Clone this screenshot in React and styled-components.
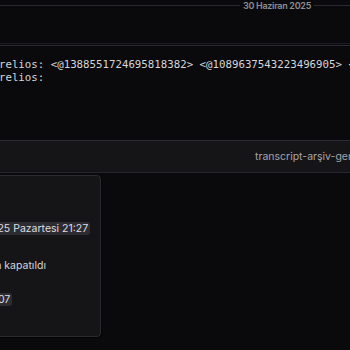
import React from 'react';
import styled, { createGlobalStyle } from 'styled-components';

const GlobalStyle = createGlobalStyle`
  html, body { margin: 0; padding: 0; background: #0a0a0c; }
  body { width: 350px; height: 350px; overflow: hidden; font-family: Inter, "Noto Sans", sans-serif; }
`;

const Page = styled.div` width: 350px; height: 350px; overflow: hidden; background: #0a0a0c; `;

const DateDivider = styled.div` display: flex; align-items: center; gap: 3px; height: 11px; `;
const DividerLine = styled.div` flex: ${p => (p.$short ? '0 0 36px' : '1')}; height: 1px; background: #2a2a2f; `;
const DividerText = styled.span` font-size: 9px; letter-spacing: -0.3px; font-weight: 600; color: #8e8e93; line-height: 11px; white-space: nowrap; `;

const Column = styled.div` margin-left: -60px; width: 600px; `;

const Separator = styled.div` margin-top: 32px; height: 1px; background: #1d1d21; `;

const CodeBlock = styled.pre`
  margin: 1px 0 0;
  border-top: 1px solid #2a2a2f;
  padding: 12px 0 0 46px;
  height: 82px;
  font-family: "DejaVu Sans Mono", "Liberation Mono", monospace;
  font-size: 10.75px;
  line-height: 13px;
  color: #d6d6d9;
  white-space: pre;
`;

const AttachmentBar = styled.div`
  display: flex;
  align-items: center;
  height: 31px;
  padding-left: 315px;
  background: #151518;
  border-top: 1px solid #2b2b30;
  border-bottom: 1px solid #26262a;
  font-size: 10.5px;
  color: #a4a4a8;
  white-space: nowrap;
`;

const Card = styled.div`
  margin-top: 2px;
  width: 161px;
  height: 162px;
  box-sizing: border-box;
  padding: 46px 0 0;
  display: flex;
  flex-direction: column;
  background: #151518;
  border: 1px solid #2b2b30;
  border-radius: 4px;
  box-shadow: 1px 1px 0 #050506;
`;

const Field = styled.div`
  box-sizing: border-box;
  padding-left: 10px;
  height: ${p => p.$h}px;
  font-size: 10.5px;
  line-height: 13px;
  color: #d4d4d8;
  white-space: nowrap;
`;

const Chip = styled.span`
  display: inline-block;
  padding: 0 2px;
  border-radius: 3px;
  background: #2c2c31;
  color: #dedee2;
`;

export default function App() {
  return (
    <Page>
      <GlobalStyle />
      <DateDivider>
        <DividerLine />
        <DividerText>30 Haziran 2025</DividerText>
        <DividerLine $short />
      </DateDivider>
      <Column>
        <Separator />
        <CodeBlock>{`Aurelios: <@1388551724695818382> <@1089637543223496905> <@1234567890123456789>
Aurelios:`}</CodeBlock>
        <AttachmentBar>transcript-arşiv-genel-ticket.html</AttachmentBar>
        <Card>
          <Field $h={37}><Chip>30.06.2025 Pazartesi 21:27</Chip></Field>
          <Field $h={34}>tarafından kapatıldı</Field>
          <Field $h={20}><Chip>ticket-0007</Chip></Field>
        </Card>
      </Column>
    </Page>
  );
}
